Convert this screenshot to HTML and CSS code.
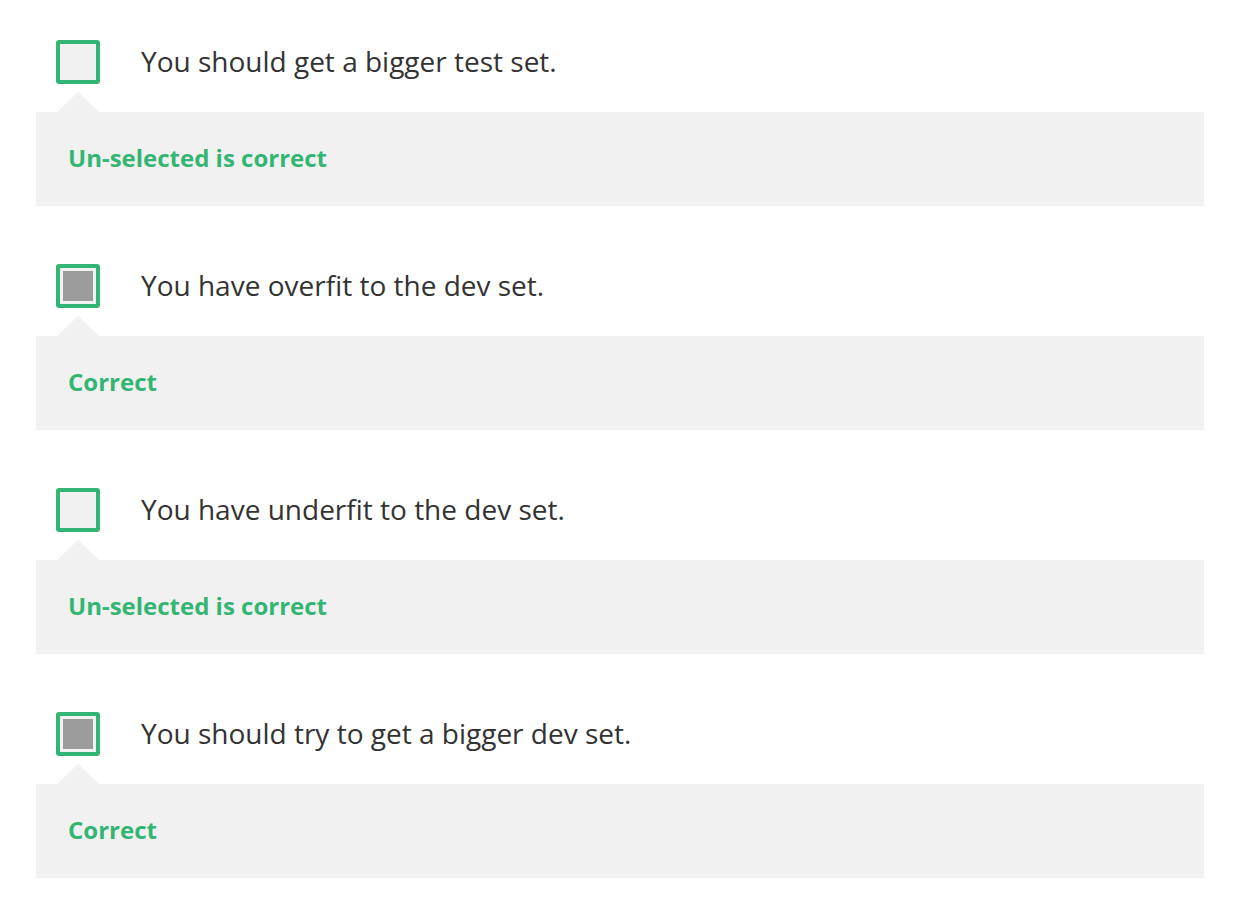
FILE: index.html
```html
<!DOCTYPE html>
<html>
<head>
<meta charset="utf-8">
<link rel="stylesheet" href="styles.css">
</head>
<body>
<div class="list">
  <div class="item">
    <div class="option">
      <span class="box"></span>
      <span class="label">You should get a bigger test set.</span>
    </div>
    <div class="feedback"><span class="result">Un-selected is correct</span></div>
  </div>
  <div class="item">
    <div class="option">
      <span class="box checked"></span>
      <span class="label">You have overfit to the dev set.</span>
    </div>
    <div class="feedback"><span class="result">Correct</span></div>
  </div>
  <div class="item">
    <div class="option">
      <span class="box"></span>
      <span class="label">You have underfit to the dev set.</span>
    </div>
    <div class="feedback"><span class="result">Un-selected is correct</span></div>
  </div>
  <div class="item">
    <div class="option">
      <span class="box checked"></span>
      <span class="label">You should try to get a bigger dev set.</span>
    </div>
    <div class="feedback"><span class="result">Correct</span></div>
  </div>
</div>
</body>
</html>
```
FILE: styles.css
```css
html, body {
  margin: 0;
  padding: 0;
  background: #ffffff;
}
body {
  font-family: "Open Sans", "Noto Sans", sans-serif;
  color: #333333;
}
.list {
  padding: 40px 44px 0 36px;
  display: flex;
  flex-direction: column;
  gap: 58px;
}
.item {
  display: flex;
  flex-direction: column;
}
.option {
  display: flex;
  align-items: center;
  height: 44px;
  padding-left: 20px;
  gap: 41px;
}
.box {
  box-sizing: border-box;
  width: 44px;
  height: 44px;
  border: 4px solid #33b573;
  border-radius: 3px;
  background: #f1f1f1;
  display: flex;
  align-items: center;
  justify-content: center;
  flex: none;
}
.box.checked::after {
  content: "";
  width: 30px;
  height: 30px;
  background: #9b9b9b;
}
.label {
  font-size: 28px;
  line-height: 36px;
  color: #333333;
  position: relative;
  top: -1px;
}
.feedback {
  position: relative;
  margin-top: 28px;
  height: 94px;
  background: #f1f1f1;
  display: flex;
  align-items: center;
  padding-left: 32px;
}
.feedback::before {
  content: "";
  position: absolute;
  left: 21px;
  top: -20px;
  width: 0;
  height: 0;
  border-left: 21px solid transparent;
  border-right: 21px solid transparent;
  border-bottom: 20px solid #f1f1f1;
}
.result {
  font-size: 24px;
  font-weight: 700;
  color: #33b573;
  position: relative;
  top: -2px;
}
```
